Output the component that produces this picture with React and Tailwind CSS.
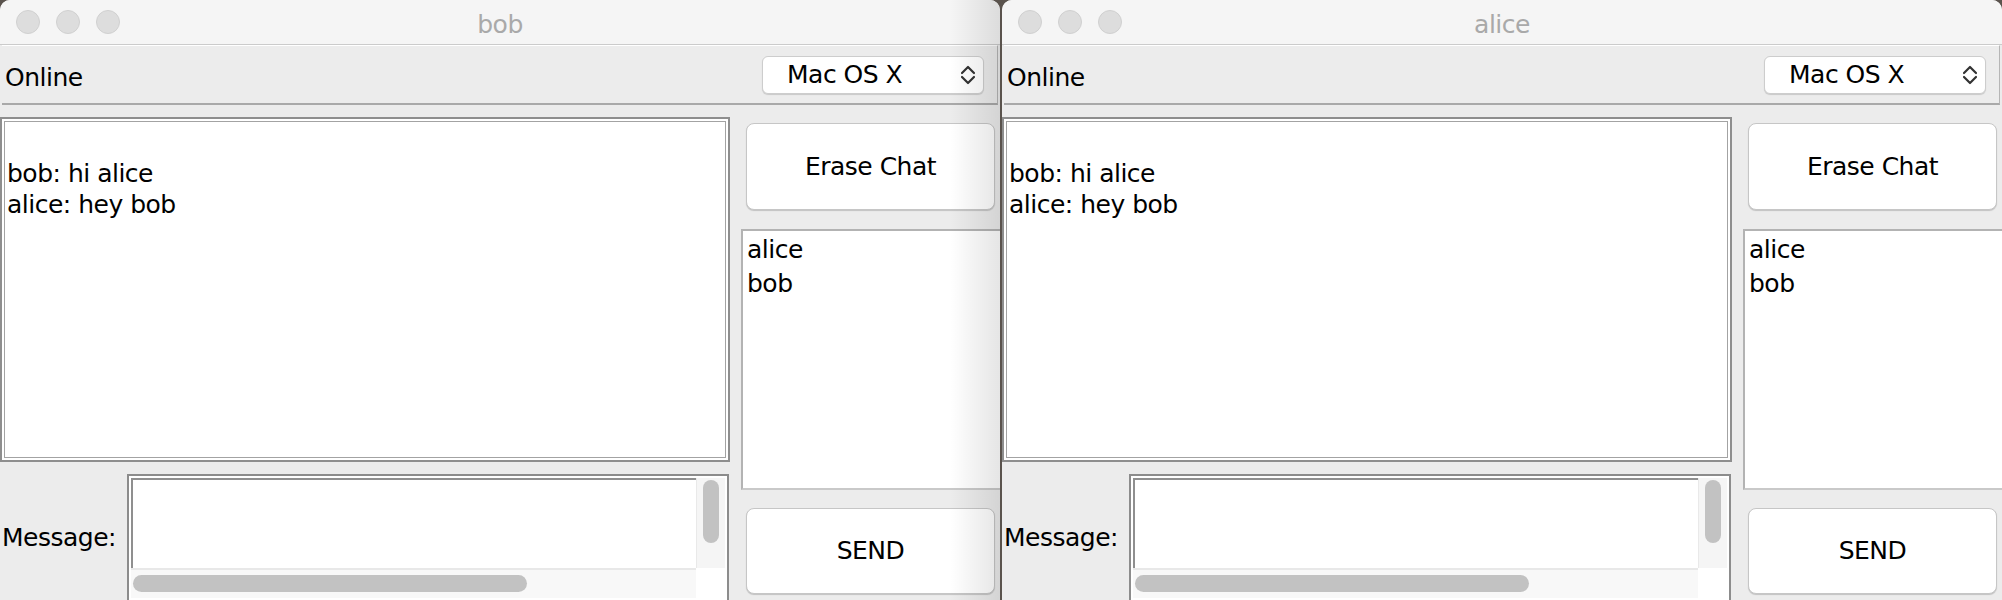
import React from "react";

const UpDown = () => (
  <svg width="16" height="20" viewBox="0 0 16 20" fill="none" stroke="#333333" strokeWidth="2.2" strokeLinecap="round" strokeLinejoin="round">
    <path d="M2 8 L8 2 L14 8" />
    <path d="M2 12 L8 18 L14 12" />
  </svg>
);

const AquaButton = ({ label, height }) => (
  <button className={`mx-[5px] ${height} rounded-[8px] bg-white border border-[#c6c6c6] shadow-[0_1px_1px_rgba(0,0,0,0.18)] flex items-center justify-center`}>
    {label}
  </button>
);

const ChatWindow = ({ title, shaded }) => (
  <div className="relative w-[1000px] h-[600px] shrink-0 overflow-hidden rounded-t-[10px] bg-[#ececec] font-['DejaVu_Sans',sans-serif] text-[25px] tracking-[-0.5px] text-black">
    {/* Title bar */}
    <div className="grid grid-cols-[1fr_auto_1fr] items-center h-[45px] bg-[#f5f5f5] border-b border-[#cbcbcb]">
      <div className="flex gap-[16px] pl-[16px]">
        {[0, 1, 2].map((i) => (
          <span key={i} className="w-[24px] h-[24px] rounded-full bg-[#dddddd] border border-[#d0d0d0]" />
        ))}
      </div>
      <div className="pt-[5px] text-[#a9a9a9]">{title}</div>
      <div />
    </div>

    {/* Status row */}
    <div className="mx-[2px] h-[60px] flex items-center justify-between border-t border-white border-b-2 border-b-[#a9a9a9] border-r border-r-[#b5b5b5] pl-[3px] pr-[13px]">
      <span className="pt-[6px]">Online</span>
      <div className="flex items-center justify-between w-[222px] h-[38px] rounded-[6px] bg-white border border-[#cdcdcd] shadow-[0_1px_1px_rgba(0,0,0,0.15)] pl-[24px] pr-[7px]">
        <span>Mac OS X</span>
        <UpDown />
      </div>
    </div>

    {/* Body */}
    <div className="flex mt-[12px]">
      <div className="flex flex-col w-[730px]">
        <div className="h-[345px] border-2 border-[#8e8e8e] bg-white p-[2px]">
          <div className="h-full border border-[#a3a3a3] pl-[2px] pt-[4px] leading-[31.5px] whitespace-pre">
            {"\nbob: hi alice\nalice: hey bob"}
          </div>
        </div>
        <div className="flex items-center pt-[12px]">
          <span className="w-[127px] pl-[2px]">Message:</span>
          <div className="w-[602px] h-[128px] shrink-0 border-2 border-[#8c8c8c] bg-white p-[2px] flex flex-col">
            <div className="flex h-[90px]">
              <div className="flex-1 border-t-2 border-l-2 border-[#8f8f8f]" />
              <div className="w-[29px] bg-[#f5f5f5] border-l border-[#e9e9e9] flex justify-center pt-[2px]">
                <div className="w-[16px] h-[63px] rounded-full bg-[#c2c2c2]" />
              </div>
            </div>
            <div className="flex h-[30px]">
              <div className="flex-1 bg-[#f8f8f8] border-t-2 border-[#e8e8e8] pl-[2px] pt-[5px]">
                <div className="w-[394px] h-[17px] rounded-full bg-[#c2c2c2]" />
              </div>
              <div className="w-[29px] bg-white" />
            </div>
          </div>
        </div>
      </div>

      <div className="flex flex-col ml-[11px] w-[259px] pt-[6px]">
        <AquaButton label="Erase Chat" height="h-[87px]" />
        <div className="mt-[19px] h-[261px] bg-white border-t-2 border-l-2 border-b-2 border-t-[#b3b3b3] border-l-[#b3b3b3] border-b-[#c9c9c9] pl-[4px] pt-[2px] leading-[34px]">
          <div>alice</div>
          <div>bob</div>
        </div>
        <div className="mt-[18px] flex flex-col">
          <AquaButton label="SEND" height="h-[86px]" />
        </div>
      </div>
    </div>

    {/* shadow cast by the front window */}
    {shaded && (
      <div className="absolute top-0 right-0 bottom-0 w-[50px] pointer-events-none bg-linear-to-l from-[rgba(0,0,0,0.1)] to-transparent" />
    )}
  </div>
);

export default function App() {
  return (
    <div className="flex gap-[2px] w-[2002px] h-[600px] overflow-hidden bg-[#5a534d]">
      <ChatWindow title="bob" shaded />
      <ChatWindow title="alice" />
    </div>
  );
}
